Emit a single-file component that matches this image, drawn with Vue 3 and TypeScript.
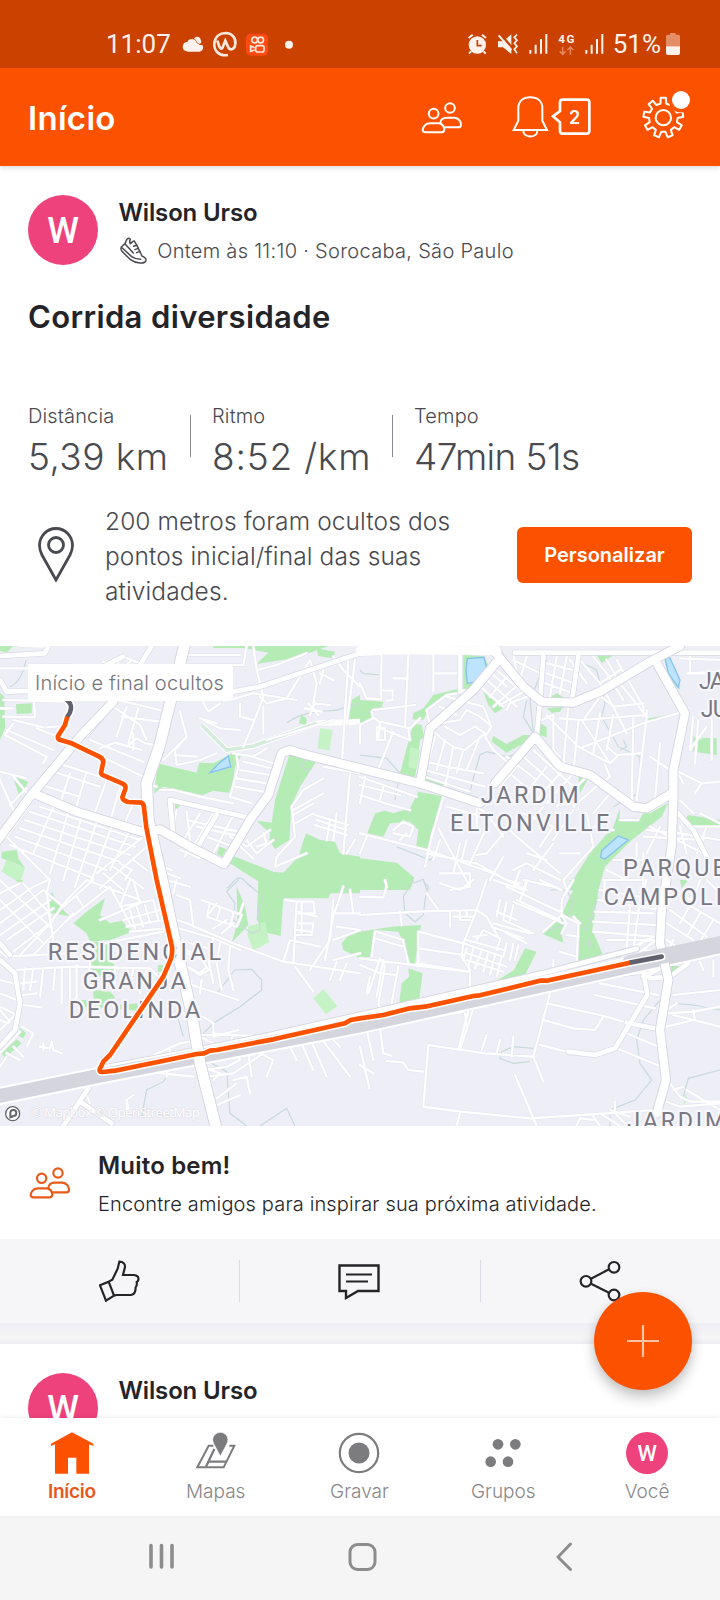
<script setup lang="ts">
interface Tile {
  dx: number
  dy: number
  parks: string
  lawns: string
  water: string
  streams: string
  minor: string
  medium: string
}

interface Label {
  text: string
  x: number
  y: number
  w: number
}

const tiles: Tile[] = [
  {
    dx: 0,
    dy: 0,
    parks:
      'M0 18H40L20 38L0 32Z M640 18H985L930 38L860 58L770 72L805 38L730 24H640Z M0 160L12 168L16 262L0 300Z M48 193L95 190L95 220L50 222Z M38 408L85 425L60 475Z M480 372L590 398L598 368L640 370L700 338L725 345L705 380L695 460L640 452L608 465L490 440L462 460L470 400Z M950 25L1005 35L1000 55L955 48Z M1080 165L1055 180L1045 250L1080 255Z M903 225L920 235L918 255L897 250Z M868 345L950 362L900 440L875 495L868 600L825 628L808 600L825 480L850 400Z M770 542L815 548L810 580Z M525 490L545 490L525 515Z M5 635L50 630L55 655L75 685L45 670L5 655Z M660 620L680 628L665 650L650 640Z M700 648L820 695L850 698L895 650L918 580L960 600L1005 605L1020 640L1080 650V760H840L760 715L690 670Z',
    lawns: 'M960 265L998 270L988 332L953 325Z M20 660L75 685L60 728L5 695Z',
    water: 'M630 398L655 372L685 348L692 380L672 386Z',
    streams:
      'M78 60C70 100 55 130 30 140M860 248C880 235 910 220 950 215S1020 215 1035 200L1080 190M920 355C900 375 900 390 935 388M680 745C700 735 700 710 725 715L760 745',
    minor:
      'M0 85H135M60 18L140 20M85 75H215L230 115M10 180L195 185M10 230L105 232L100 160M0 205H40M15 285L40 250M15 285L140 350L130 370M110 265L270 330M40 240L130 262M140 262L185 258M275 335L430 410M300 325L345 308L425 330M270 300L430 365M340 200L420 255L440 300M350 180L480 210M365 230L480 245M380 200L350 290M415 205L385 310M335 90L370 50L420 70M310 65L370 95M345 110L395 60M270 100L240 105M0 395L80 415M20 270L160 330M100 450L125 435L240 470M145 390L300 440M160 365L330 420M260 395L225 515M210 400L180 490M320 420L280 530M360 440L330 545M400 490L370 560M100 480L20 590L150 720M120 500L420 600M90 515L405 620M75 540L390 645M60 565L360 665M45 590L320 690M30 615L280 715M160 500L100 640M205 515L150 700M245 530L190 720M290 545L225 740M335 560L275 720M385 580L330 690M430 590L290 700M440 620L300 745M340 680L430 745M360 670L395 690L375 720M400 660L440 690M310 700L370 750M560 45H720M565 75H730L740 18M760 18L770 90L790 170L760 250L730 320M770 90L830 75L920 40M540 90L600 130L690 180L760 160L890 180M640 110L600 170M660 190L625 215L600 170M780 170L800 190L860 175L930 60M790 200L790 280M760 240L720 230L720 190M610 240L660 265L720 270M540 215L560 290L490 360M560 290L525 330L530 375L600 360L650 340M525 345L590 350M700 340L760 350L800 325M930 60L950 130L940 190L990 195M1000 50L1030 90L1080 140M1045 60L1025 380M1065 60L1040 250M960 100L1000 120M970 90L960 130M925 190L955 225M945 185L930 225M915 205L965 215M650 250L600 235M800 300L1000 240M740 345L820 370M730 365L815 385M720 390L810 405M710 415L800 430M705 440L790 455M710 350L715 380L690 470L755 490M480 450H520L600 470L700 490M530 510L515 580M560 515L570 600M600 520L550 600M640 520L580 620M700 525L640 640M740 540L670 655M590 560L720 590M560 540L740 580M620 590L700 620M690 590L740 620L810 570M740 600L770 640L820 600M720 620L760 655M790 580L800 610L770 620M970 415L910 450L875 500L885 590L830 650L825 680L920 640M970 460L880 510M940 490L880 525M940 520L885 550M945 525L1045 555M950 540L1040 570M945 555L1040 585M970 380L1080 400M990 540L980 600M1010 520L1000 600M1050 400L1030 640M1065 600L1040 640M480 650L500 700L540 715M485 680L515 690M380 320L410 295L435 310M400 280V330M440 310L480 320M430 430L470 440M0 420L40 510M40 410L90 470M30 495L80 445M540 630L600 655M565 625L555 650',
    medium:
      'M0 48L135 40L145 18M0 120L20 155L110 152M510 480L755 535M510 480L520 585M650 525L590 625M145 160L120 150M700 155L780 140L1085 38M455 18L420 75M370 50L250 110M350 175L260 285',
  },
  {
    dx: 1080,
    dy: 0,
    parks:
      'M310 45L370 48L395 90L350 140L310 155Z M0 180L70 185L65 205L40 215L45 240L0 248Z M290 148L300 158L240 175L210 200L190 240L158 238L160 220L190 205L220 165Z M370 155L430 205L405 220L385 195Z M565 175L590 160L615 175Z M560 205L610 200L600 215L575 218Z M540 248L560 262V292L540 285Z M400 288L440 312L490 285H515L520 295L440 338L395 305Z M160 250L185 255L192 290L180 300L165 415L120 400Z M190 400L255 430V445L190 430Z M175 455L248 468L200 632L168 625L175 570L150 545L90 550L70 590L22 580L45 520L75 512L100 520L150 505Z M710 45L760 45L725 70Z M865 235L940 222L865 248Z M1000 288L1018 300L1028 293L1070 295V345L1000 335Z M985 525L1080 540V560H1000L970 545Z M655 410L685 415L660 460Z M780 505L778 540L835 545L850 520H870L925 488L905 530L815 600L735 680L715 750H620L690 640L760 560Z M0 655L110 668L162 712L150 750H0Z M910 50L950 90L960 150L935 130Z',
    lawns: 'M150 322L180 328L172 388L145 382Z',
    water:
      'M322 56L372 52L380 85L360 125L322 130L318 90Z M915 50L930 55L960 120L955 142L925 100Z M725 632L775 588L805 600L735 657L722 652Z',
    streams:
      'M0 345L80 355L120 400L105 480M325 490C330 440 350 380 360 345L380 335L440 350L480 340M500 180L490 230L520 280L510 180L560 60M650 60L710 90L735 190L725 230L775 320L840 350L835 460L760 500M790 300L800 320L780 330M0 90L10 100L60 105M240 640L210 660L110 620M160 730L190 718L200 750',
    minor:
      'M65 45L62 155M0 45L65 42M145 45L135 262M220 45V155M220 100H300M100 115H145M0 130L20 175L65 178L62 152H98V180L80 182M40 210L165 195M35 215L40 235L0 255M0 255V310M45 235L60 250L55 300M60 265L150 300L145 270M50 260L75 265V300H50ZM100 275L50 400M0 410L170 470M0 435L120 465M0 465L75 490L150 510M15 410L0 490M70 440L60 480M250 470L215 590L195 680M260 500L370 530M200 365L260 380L370 400M195 390L375 440M195 410L330 455M225 290L200 380M255 300L230 390M280 320L255 440M310 330L290 400M360 290L320 390M215 270L250 300L280 320L315 330L375 280L345 260L300 285L255 260M240 250L300 240L320 210L360 230L395 260L375 290L400 330L440 365M240 200L290 225M260 170L370 200L390 250M210 260L200 210L260 165L330 155M180 235L150 265L60 245M350 130L430 200M370 110L470 200M395 100L440 140M410 90L480 150M400 200L490 120M390 170L440 110M420 195L500 150M440 210L450 190L500 170M460 60L540 100M500 50L480 120M560 70L640 90M560 100L640 130M555 130L640 160M590 50L570 170M620 50L600 160M460 40L470 100L440 110M660 60L720 130L760 200L800 280M700 50L740 100L790 180M740 60L780 130L860 230M770 60L850 200V230M720 130L780 90M700 150L760 200L850 190M630 60L680 130M560 225L655 320L750 370L775 345M580 225V330L600 350M545 240L580 225M625 195L610 380M655 245L640 400M600 235L665 240L860 225L860 210M670 240L720 170M665 240L750 370M720 220L700 340M760 225L740 330M820 235L815 490M860 230L830 480M660 325L850 250L970 215M900 310L885 480M840 340L770 345L740 320M735 375L750 410L720 430M440 350L530 420M490 350L580 430M520 330L640 440M560 380L490 470M600 400L530 480M640 400L560 490M470 380L420 440M690 400L590 500M720 430L640 500M750 460L700 520M450 400L520 460M870 350L960 410L970 430M955 395L1025 430L1080 425M1025 430L1005 460M960 55L1080 60M990 50V100H1050M1000 230L990 330L1040 260M1055 235V360M1015 240L1005 370M980 100L1080 95M350 560L350 500L380 520L430 590M440 560L470 590L600 700M390 540L330 670M430 580L380 640L350 645M300 610L280 700M320 600L305 660M235 565L330 740M200 640L350 670L440 720L480 730M0 580L200 630L400 700L500 750M20 590L0 640M120 600L140 580M100 570L130 545L160 560L150 590L100 580M240 600L220 660M240 700H330V740L270 750M490 520L580 560L540 620M550 500L490 570M640 510L580 600M680 520L700 620L610 720L620 750M700 560L760 570M580 610L520 690M600 640L660 640M460 690L500 670L600 720M500 640L560 660M430 650L390 720M480 690L460 740M780 540L835 540M860 570L960 580L1080 600M830 610V680M850 590L1030 600M870 560L1030 640M760 660H860M740 690L800 720M850 640L850 750M900 560L860 640M730 720H860M960 560L980 640M960 480L1000 520M1000 560H1080M1020 520L1080 550M1040 560L1010 640',
    medium:
      'M300 40V155H345M655 50L645 120L635 188M465 38H1080M550 50L540 185M540 185L530 290M945 510L1000 570L1040 650M0 30L160 25L400 30M360 18L400 40M400 0L430 60',
  },
  {
    dx: 0,
    dy: 720,
    parks:
      'M155 35L180 80L208 108L142 98Z M315 55L300 105L330 130L365 122L397 155L330 180L270 185L260 160L220 130L260 95Z M275 185H325V240L345 255L335 290H290L270 260Z M280 330L330 335L345 350L320 385L240 380L245 360L280 360Z M350 375L420 370L415 392L360 388Z M475 255H490L485 275H473Z M50 478L65 490L15 533L5 520Z M60 445L78 458L70 475L52 465Z M775 0L860 50L850 58L842 168L800 158L770 120Z M710 18L735 80L745 135L695 188L712 130Z M775 0H1080V22L1000 15L985 55L870 55L820 50Z M1025 190L1065 145L1080 150V235L1030 210Z M45 0L70 0L60 10Z',
    lawns: 'M795 125L808 185L760 212L742 165L745 140Z M940 355L970 328L1012 378L978 403Z',
    water: '',
    streams:
      'M715 0L680 35L705 70L700 120L755 160L780 150L775 90L790 50L740 10M650 340L705 270L755 268L785 300L785 330L720 380L640 430L600 470M530 400L550 470M600 530L680 575L690 700L740 738M500 590L490 605L440 630L425 710M780 738L860 685L885 738M590 390L600 470',
    minor:
      'M0 40L60 10M0 90L100 20L145 0M0 130L130 30L190 80L280 0M0 165L150 60M20 180L160 85M40 215L150 130L200 60L260 0M0 215L20 230L200 220M60 225L160 120M100 225L220 100M0 60L130 190M30 30L150 140M70 10L120 70L145 95L160 180M150 0L140 40L160 180M230 50L250 80M190 130L330 20M260 0L420 60M330 20L395 140M390 0L360 80L460 60M400 0L420 70L300 120M370 120L480 90M380 140L490 120M390 155L500 145M310 190L490 155M390 90L405 145M410 80L430 140M435 75L450 130M460 60L475 120M45 270L220 260L450 265L475 290M130 265L120 350M165 265L160 330M185 265V370M210 265V380M100 265L90 330M75 265L70 330M230 255V350L210 380M270 250L260 330M345 260V330M400 265L390 320M440 270L420 340M70 375L125 382M65 440L100 460L80 500M60 455L0 520M30 425L0 390M50 400L0 450M20 520L60 540M40 500L70 530M120 500L150 505L155 485L160 510L185 520M130 490V510M60 310L110 305M70 345L110 340M0 300L40 310M0 340L50 360M0 380L40 400M0 420L25 430M500 0L570 20M530 0L520 40M530 45L570 60L580 140M500 110L560 130L700 190L850 245L1080 280M520 140L640 175L720 210M640 175L625 240L640 310M660 190L650 250L665 330M690 200L685 270L700 330M540 200L600 230L625 270L600 285L560 260M540 180L640 210M560 220L610 240M545 250L600 280L615 265M560 310L715 360M575 300L570 330M605 300L600 340M630 260L640 310M605 60L725 105L710 140L620 110L650 70M630 70L620 110M660 85L650 120M700 100L690 140M665 160L700 130M640 145L680 120M855 60L890 65L880 250M850 245L870 180L960 200M890 65H940L945 100H895M890 95L950 110M895 130H940L935 165H890M890 150L930 155M905 65V160M1000 60L990 180L950 240L930 270M1030 20L1000 110L975 240M1000 100H1080M1010 140L1080 150M1050 30L1060 100M1000 180L1080 150M1040 250L1020 300M1010 245L990 300M1000 240L1080 220M885 260L940 335M720 100L730 70M450 530L540 490L600 480M480 545L600 500M500 560L520 570L600 530M510 510L500 590M600 465H700L690 490M600 470L660 500M640 460L700 465L800 470M620 570L680 560L720 540L700 500M620 590L700 580L790 520M440 575L580 590M600 560L660 580L640 600M700 600L740 590L750 640M380 700V660L400 645M380 660L390 700M650 655L710 610M640 680L720 645M630 630L650 680M800 590L820 540L780 520M870 500L890 540M900 480L940 570M930 475L980 590M960 470L1050 590M985 465L1020 500M745 520L755 590M610 410L640 430V460M580 390L550 400M640 470L715 450M0 0L30 30M0 560L20 530M250 620L270 670M260 590L245 620',
    medium: 'M0 190L30 225M0 240L45 280L60 370L45 450L0 500M265 625L190 738M240 665L335 730',
  },
  {
    dx: 1080,
    dy: 720,
    parks:
      'M0 0H162L150 28L0 22Z M0 155L48 148L95 140L183 135L165 250L145 248L130 185L115 155L50 150L30 232L0 230Z M145 265L188 280L178 355L118 368L125 310L148 290Z M400 308L462 270L495 205L530 215L495 285L440 300Z M628 0L640 30L625 60L605 105L660 130L652 252L733 235L697 150L720 0Z M605 108L620 125L605 165L610 188L548 162L580 130Z M735 218H800L780 232L735 238Z M930 258H958L930 285Z M960 0H985L965 25Z',
    lawns: 'M975 640L985 660L970 675Z',
    water: '',
    streams:
      'M160 0L130 50L135 100L165 125L190 105L195 60L205 20L190 5M640 30L570 30M565 150L600 140L640 70L620 30M660 130L680 150L715 50M460 550L420 535L425 515L460 500L520 505M460 550L510 545M900 360L850 420L830 480L840 550L875 600L825 660L750 690V738M940 370L1000 375L1080 390M970 650L985 595L1080 570M685 180L695 190L685 200Z',
    minor:
      'M0 105L170 95L350 90M380 0L350 90L310 190L305 230L330 270V370L295 510M120 95L125 135M0 50L70 52L80 20L75 0M200 40L235 90M240 10L300 30L340 0M400 0L490 30L500 0M490 0L580 20M500 10L480 60M440 20L600 95M460 65L610 130M470 60L600 120M420 60L410 110M440 65L430 115M460 75L450 120M410 95L470 120M350 90L380 110L420 180L410 210M310 190L430 230L440 190M320 180L430 210M350 180L370 150L420 175M340 170L380 165M320 205L310 240M340 205L325 260M365 210L345 265M385 215L370 275M405 225L390 285M425 230L410 290M320 220L440 260M320 240L430 275M400 130L510 160M395 140L490 175M430 120L520 160M440 160L500 190M460 190L450 240M475 195L465 240M270 95V140M300 95V120H330M320 90V110M280 110H340M50 155L130 180M45 175L130 200M45 155L35 230M130 185L145 250M175 155L310 190M175 205L310 225M170 250L330 275M175 155V250M0 235L320 275M0 255L60 280L110 285M60 235L25 340M70 240L50 350M115 260L95 370M30 290L20 340M65 240L75 260L55 370L60 385M605 105L655 130L650 250M640 0L605 60V105L550 155M605 105L620 130L605 160M660 130L640 110M600 215L650 230M580 240V290M620 165L655 170M720 30L900 60M715 60L900 90M705 95L880 100M700 125L890 135M700 155L880 170M740 180H880M810 80L800 200M840 60L820 210M860 0L840 60M735 0L730 60M960 60L1080 130M930 90L1040 170M920 130L1000 180M1000 60L960 130M1020 100L980 170M1060 120L1010 200M940 40L1000 60L1020 0M1040 0L1080 40M540 0L605 30M570 340L520 530L375 520L205 495L190 680L300 695L510 715L740 700L880 690M560 370L720 405L810 430M550 420L640 445L705 450L730 410M540 495L620 515M380 465L365 510M420 480L410 520M460 470L455 530M300 510L340 385M315 400L320 440M295 510L325 395M230 410L310 395M60 445L70 520L95 528M80 543L130 548L145 570L190 575M0 500L28 625M0 455L45 450M20 450L40 540M465 585L530 738M520 530L550 605M300 700L290 738M705 345L885 385M720 310L895 345M800 460L895 500M770 505L905 560M650 735L660 715L700 720M700 710L720 738M765 665V700L800 735M750 690L810 710M720 700L780 738M940 345L1080 330M920 400L1000 395L1080 380M920 440L1000 420L1080 440M1000 390L1005 420M940 405L1000 420M915 440L960 430M920 390L950 370M930 610L960 650L990 665H1080M980 630L1080 690M920 665L960 680L1080 670M940 630L970 620M1060 240V290M1020 245L1030 270M760 230L880 170M830 205L850 185L880 180M840 215L890 180M920 180L950 200M850 210L900 215M940 180L920 220M0 555L40 580',
    medium:
      'M640 300L750 285L850 275L870 295L930 290M850 275L862 345L765 505L705 525L625 515M800 428L895 447M930 290L985 250M940 240L1080 200M850 290L960 235',
  },
]

const labels: Label[] = [
  { text: 'JARDIM', x: 1442, y: 488, w: 294 },
  { text: 'ELTONVILLE', x: 1350, y: 574, w: 478 },
  { text: 'JA', x: 2097, y: 147, w: 78 },
  { text: 'JU', x: 2102, y: 232, w: 82 },
  { text: 'PARQUE', x: 1869, y: 708, w: 308 },
  { text: 'CAMPOLIM', x: 1811, y: 795, w: 425 },
  { text: 'RESIDENCIAL', x: 143, y: 961, w: 520 },
  { text: 'GRANJA', x: 248, y: 1047, w: 310 },
  { text: 'DEOLINDA', x: 206, y: 1133, w: 395 },
  { text: 'JARDIM', x: 1882, y: 1466, w: 294 },
]

const majors =
  'M555 10L510 190L478 320L440 430L445 540L487 720L520 880L575 1120L600 1270L650 1470 M-10 605L90 470L240 290L340 185 M100 460L230 515L440 580L480 568L570 620L672 672L750 540L805 465L845 340L868 330L920 345L1080 385L1260 430L1440 490 M1480 30L1570 140L1625 185L1720 188L1800 155L1950 65L2040 18 M1495 60L1420 150L1290 265L1260 430 M1605 290L1485 430 M1605 290L1680 380L1770 405L1900 500L1940 505L2015 460 M1965 60L2055 220L2020 390V480L2015 620L1985 810L1980 910L2005 1020L1980 1170L1998 1320L1970 1420'
const avenue = 'M555 10L510 190L478 320L440 430L445 540L487 720L520 880L575 1120L600 1270L650 1470'

const highway = 'M-20 1372L300 1307L1080 1156L2180 914'
const service = 'M300 1285L480 1252L800 1187L1080 1124L1640 997L1910 926'
const route =
  'M202 230L195 255L174 288Q172 298 184 301L215 310L298 350Q313 358 309 370L303 398Q303 402 310 406L368 431Q379 437 376 447L367 472Q368 482 385 486L425 488Q432 492 432 504L439 562L470 720L500 850L516 920Q518 940 513 956L490 1010L330 1245L310 1265L299 1288Q297 1297 308 1296L345 1292L590 1242L612 1240L630 1232L650 1230L820 1198L1035 1150L1052 1140L1080 1135L1150 1125L1230 1105L1275 1100L1420 1068L1440 1066L1540 1042L1620 1022L1640 1022L1890 968'
const hiddenStart = 'M190 170Q216 190 213 205Q212 218 202 230'
const hiddenEnd = 'M1890 968L1985 950'

function gearPath(cx: number, cy: number, teeth: number, outer: number, inner: number): string {
  const step = (Math.PI * 2) / teeth
  const pts: string[] = []
  for (let i = 0; i < teeth; i++) {
    const a = Math.PI / 2 + step / 2 + i * step
    const corners: [number, number][] = [
      [inner, -0.29],
      [outer, -0.19],
      [outer, 0.19],
      [inner, 0.29],
    ]
    for (const [r, f] of corners) {
      const t = a + f * step
      pts.push(`${(cx + r * Math.cos(t)).toFixed(1)} ${(cy + r * Math.sin(t)).toFixed(1)}`)
    }
  }
  return `M${pts.join('L')}Z`
}
const gear = gearPath(912, 351, 9, 60, 43)

const people =
  'M200 394H247Q255 394 255 385Q253 370 240 367H211C197 367 190 380 190 388Q190 394 200 394Z M243 366C243 356 252 350 261 350H285C298 351 305 362 305 371Q305 379 297 379H254'
</script>

<template>
  <div class="screen">
    <div class="status">
      <span class="clock">11:07</span>
      <svg class="status-left" viewBox="540 85 350 90">
        <g fill="#fff2ec">
          <path d="M562 152C540 150 548 122 562 124C566 112 586 112 590 126Q598 134 608 134C612 144 606 153 598 153H562Z" />
          <path d="M582 114C588 104 603 108 602 118C606 122 603 128 600 129Q594 130 591 124Q588 117 582 114Z" />
          <circle cx="867" cy="132" r="12" />
        </g>
        <rect x="738" y="99" width="66" height="66" rx="14" fill="#ff4a10" />
        <path
          d="M684 163C655 168 641 148 643 127C646 107 660 97 677 97C697 98 708 112 706 130C704 149 688 150 684 138L676 120L667 142Q662 147 658 138L652 120"
          fill="none"
          stroke="#ffe9df"
          stroke-width="8"
        />
        <g fill="none" stroke="#ffe9df" stroke-width="5">
          <circle cx="764" cy="118" r="8.500000" />
          <circle cx="782" cy="118" r="8.500000" />
          <rect x="767" y="135" width="25" height="19" rx="6" />
          <path d="M764 141L752 136V152L764 148" />
        </g>
      </svg>
      <svg class="status-right" viewBox="320 85 420 90">
        <g fill="#fff2ec">
          <circle cx="351" cy="133" r="26" />
          <path d="M325 112L337 102M377 112L365 102M332 152L326 159M370 152L376 159" stroke="#fff2ec" stroke-width="6" />
          <path d="M351 118V135H364" fill="none" stroke="#ca4100" stroke-width="5" />
          <path d="M413 122H428L453 101V160L428 140H413Z" />
          <path d="M418 96L462 150" stroke="#ca4100" stroke-width="7" />
          <path d="M415 104L453 148" stroke="#fff2ec" stroke-width="6" />
          <path d="M470 102L462 110L470 119L462 128L470 137L462 146L470 158" fill="none" stroke="#fff2ec" stroke-width="5" />
          <path d="M507 148h6v11h-6zM523 132h6v27h-6zM539 115h6v44h-6zM555 100h6v59h-6z" />
          <path d="M675 148h6v11h-6zM691 132h6v27h-6zM707 115h6v44h-6zM723 100h6v59h-6z" />
          <text x="594" y="128" class="net" textLength="48">4G</text>
        </g>
        <path d="M607 138V160M598 152L607 161L616 152M630 162V140M621 148L630 139L639 148" fill="none" stroke="#e6885c" stroke-width="4.500000" />
      </svg>
      <span class="percent">51%</span>
      <svg class="battery" viewBox="915 95 48 72">
        <path d="M930 98H947V103H955Q960 103 960 108V138H918V108Q918 103 923 103H930Z" fill="#e58d64" />
        <path d="M918 138H960V158Q960 164 954 164H924Q918 164 918 158Z" fill="#fff2ec" />
      </svg>
    </div>

    <header class="appbar">
      <h1>Início</h1>
      <svg class="h-people" viewBox="185 300 125 100">
        <g fill="none" stroke="#fff" stroke-width="6">
          <circle cx="223" cy="338" r="14.500000" />
          <circle cx="272" cy="321" r="14.500000" />
          <path :d="people" />
        </g>
      </svg>
      <svg class="h-bell" viewBox="455 285 245 132">
        <g fill="none" stroke="#fff">
          <path stroke-width="6" d="M463 390H563L549 362V325C549 302 533 292 513 292S477 302 477 325V362Z" />
          <path stroke-width="6" d="M492 392C492 415 534 415 534 392" />
          <path stroke-width="8" d="M610 299H682Q690 299 690 307V393Q690 401 682 401H610Q602 401 602 393V367L581 349L602 333V307Q602 299 610 299Z" />
        </g>
        <text class="badge" x="646" y="371" text-anchor="middle">2</text>
      </svg>
      <svg class="h-gear" viewBox="845 265 150 152">
        <path :d="gear" fill="none" stroke="#fff" stroke-width="6" stroke-linejoin="round" />
        <circle cx="912" cy="351" r="23" fill="none" stroke="#fff" stroke-width="6" />
        <circle cx="965" cy="298" r="37" fill="#fc5200" />
        <circle cx="965" cy="298" r="27" fill="#fff" />
      </svg>
    </header>

    <main class="feed">
      <article class="card">
        <div class="author">
          <div class="avatar">W</div>
          <div class="who">
            <strong class="name">Wilson Urso</strong>
            <div class="meta">
              <svg class="shoe" viewBox="355 200 86 82">
                <g fill="none" stroke="#494950" stroke-width="4.500000" stroke-linejoin="round" stroke-linecap="round">
                  <path d="M389 207Q382 200 377 210L373 220L362 230Q359 236 364 243L388 267Q402 277 418 278Q437 279 436 267Q434 261 424 257L409 226L402 214Q400 210 396 214L389 220Q385 216 389 207Z" />
                  <path d="M365 233L393 259Q405 267 420 267M374 222L398 248M399 228L408 225M403 238L413 234M408 247L418 243" />
                </g>
              </svg>
              <span>Ontem às 11:10 · Sorocaba, São Paulo</span>
            </div>
          </div>
        </div>
        <h2>Corrida diversidade</h2>
        <div class="stats">
          <div class="stat s1"><span class="k">Distância</span><span class="v">5,39 km</span></div>
          <i class="bar"></i>
          <div class="stat s2"><span class="k">Ritmo</span><span class="v">8:52 /km</span></div>
          <i class="bar"></i>
          <div class="stat s3"><span class="k">Tempo</span><span class="v">47min 51s</span></div>
        </div>
        <div class="privacy">
          <svg class="pin" viewBox="0 0 36 56">
            <g fill="none" stroke="#494950" stroke-width="2.800000">
              <path d="M18 53L4 28Q1.500 23 1.500 18.500A16.500 17 0 0 1 34.500 18.500Q34.500 23 32 28Z" />
              <circle cx="18" cy="18" r="7.500000" />
            </g>
          </svg>
          <p>200 metros foram ocultos dos<br />pontos inicial/final das suas<br />atividades.</p>
          <button class="cta">Personalizar</button>
        </div>
      </article>

      <div class="map">
        <svg viewBox="0 18 2160 1440" width="720" height="480">
          <rect y="18" width="2160" height="1440" fill="#eeeef7" />
          <g v-for="(t, i) in tiles" :key="'p' + i" :transform="`translate(${t.dx} ${t.dy})`">
            <path :d="t.parks" fill="#b5ebb5" />
            <path :d="t.lawns" fill="#c5f3c5" />
            <path v-if="t.water" :d="t.water" fill="#bde4ff" stroke="#86c1f2" stroke-width="4" />
            <path :d="t.streams" fill="none" stroke="#c8dad9" stroke-width="3.500000" />
          </g>
          <path d="M605 255L680 330L760 318L950 250L1080 245" fill="none" stroke="#fff" stroke-width="17" />
          <path d="M605 255L680 330L760 318L950 250" fill="none" stroke="#d5ecdc" stroke-width="11" />
          <g v-for="(t, i) in tiles" :key="'c' + i" :transform="`translate(${t.dx} ${t.dy})`" class="line">
            <path :d="t.minor" stroke="#e6e6f1" stroke-width="10" />
          </g>
          <g v-for="(t, i) in tiles" :key="'m' + i" :transform="`translate(${t.dx} ${t.dy})`" class="line">
            <path :d="t.minor" stroke="#fff" stroke-width="6.500000" />
            <path :d="t.medium" stroke="#d9d9e8" stroke-width="18" />
            <path :d="t.medium" stroke="#fff" stroke-width="14" />
          </g>
          <g class="line">
            <path :d="service" stroke="#d8d8e2" stroke-width="20" />
            <path :d="service" stroke="#fff" stroke-width="14" />
            <path :d="highway" stroke="#fff" stroke-width="54" />
            <path :d="highway" stroke="#d5d5de" stroke-width="42" />
            <path :d="majors" stroke="#d2d2e3" stroke-width="30" />
            <path :d="avenue" stroke="#d2d2e3" stroke-width="37" />
            <path :d="majors" stroke="#fff" stroke-width="25" />
            <path :d="avenue" stroke="#fff" stroke-width="32" />
            <path d="M1890 968L2180 907" stroke="#d5d5de" stroke-width="46" />
            <path d="M1080 30L1490 32" stroke="#fff" stroke-width="26" />
          </g>
          <g class="place">
            <text v-for="(l, i) in labels" :key="'l' + i" :x="l.x" :y="l.y" :textLength="l.w">{{ l.text }}</text>
          </g>
          <g class="line">
            <path :d="hiddenStart" stroke="#fff" stroke-width="23" />
            <path :d="hiddenEnd" stroke="#fff" stroke-width="23" />
            <path :d="route" stroke="#fff" stroke-width="23" />
            <path :d="hiddenStart" stroke="#62626e" stroke-width="14" />
            <path :d="hiddenEnd" stroke="#62626e" stroke-width="14" />
            <path :d="route" class="track" />
          </g>
          <circle cx="38" cy="1421" r="21" fill="#fff" stroke="#66666e" stroke-width="4" />
          <path d="M31 1432V1418A9 9 0 1 1 40 1428Q36 1430 31 1432Z" fill="none" stroke="#66666e" stroke-width="6" />
          <text class="attr" x="92" y="1432" textLength="508">© Mapbox © OpenStreetMap</text>
        </svg>
        <span class="tag">Início e final ocultos</span>
      </div>

      <section class="kudos">
        <svg class="k-people" viewBox="185 300 125 100">
          <g fill="none" stroke="#e85a1a" stroke-width="6.500000">
            <circle cx="223" cy="337" r="14" />
            <circle cx="272" cy="321" r="14" />
            <path :d="people" />
          </g>
        </svg>
        <div class="k-text">
          <strong>Muito bem!</strong>
          <span>Encontre amigos para inspirar sua próxima atividade.</span>
        </div>
      </section>

      <div class="actions">
        <div class="act">
          <svg width="42" height="42" viewBox="298 404 126 126">
            <path
              d="M301 480L327 469L343 511L319 526ZM327 469L338 463L354 430L359 409Q377 410 376 425L370 449H402Q418 451 416 462Q417 466 411 470Q413 480 408 486Q408 508 394 509H350L343 511"
              fill="none"
              stroke="#242428"
              stroke-width="6.500000"
            />
          </svg>
        </div>
        <i class="split"></i>
        <div class="act">
          <svg class="bubble" width="42" height="36" viewBox="0 0 42 36">
            <path d="M1.500 1.500H40.500V27H20L8 34V27H1.500Z" fill="none" stroke="#242428" stroke-width="2.400000" />
            <path d="M8 10.500H34M8 17.500H30" stroke="#242428" stroke-width="2.200000" />
          </svg>
        </div>
        <i class="split"></i>
        <div class="act">
          <svg width="42" height="42" viewBox="657 104 126 126">
            <g fill="none" stroke="#242428" stroke-width="6.500000">
              <circle cx="678" cy="168" r="16" />
              <circle cx="762" cy="126" r="16" />
              <circle cx="762" cy="209" r="16" />
              <path d="M693 160L747 132M693 175L747 202" />
            </g>
          </svg>
        </div>
      </div>
      <div class="gap"></div>
      <article class="card next">
        <div class="author">
          <div class="avatar">W</div>
          <div class="who"><strong class="name">Wilson Urso</strong></div>
        </div>
      </article>
      <button class="fab" aria-label="Adicionar">
        <svg width="32" height="32" viewBox="0 0 32 32"><path d="M16 0V32M0 16H32" stroke="#ffc3a4" stroke-width="2.200000" /></svg>
      </button>
    </main>

    <nav class="tabs">
      <div class="tab on">
        <svg viewBox="150 258 132 132"><path d="M216 262L280 296V303L267 298V386H229V338H204V386H165V298L153 303V296Z" fill="#fc5200" /></svg>
        <span>Início</span>
      </div>
      <div class="tab">
        <svg viewBox="582 258 132 132">
          <g fill="none" stroke="#7c7c7f" stroke-width="6">
            <path d="M640 302H626L592 367H671L703 302H688" />
            <path d="M643 312L618 365M628 350H678" stroke-width="7" />
          </g>
          <path d="M661 334L642 298Q638 290 638 284A23 22 0 0 1 684 284Q684 290 680 298Z" fill="#7c7c7f" stroke="#fff" stroke-width="2" />
        </svg>
        <span>Mapas</span>
      </div>
      <div class="tab">
        <svg viewBox="0 0 44 44">
          <circle cx="22" cy="22" r="19.200000" fill="none" stroke="#7c7c7f" stroke-width="2.200000" />
          <circle cx="22" cy="22" r="10.500000" fill="#7c7c7f" />
        </svg>
        <span>Gravar</span>
      </div>
      <div class="tab">
        <svg viewBox="366 63 132 132">
          <g fill="#7c7c7f">
            <circle cx="417" cy="103" r="16" />
            <circle cx="469" cy="103" r="16" />
            <circle cx="395" cy="155" r="16" />
            <circle cx="447" cy="155" r="16" />
          </g>
        </svg>
        <span>Grupos</span>
      </div>
      <div class="tab">
        <div class="mini">W</div>
        <span>Você</span>
      </div>
    </nav>

    <div class="system">
      <svg viewBox="0 0 720 84" width="720" height="84">
        <g fill="none" stroke="#8d8d8d" stroke-linecap="round" stroke-linejoin="round">
          <path d="M151 29.500V51M161.500 29.500V51M172 29.500V51" stroke-width="3.600000" />
          <rect x="350" y="28.500" width="25" height="25" rx="7.500000" stroke-width="3" />
          <path d="M570.500 28L558 41L570.500 53.500" stroke-width="3" />
        </g>
      </svg>
    </div>
  </div>
</template>

<style>
body {
  margin: 0;
  background: #fff;
}
</style>

<style scoped>
.screen {
  width: 720px;
  height: 1600px;
  display: flex;
  flex-direction: column;
  overflow: hidden;
  background: #fff;
  color: #242428;
  font-family: Inter, 'Liberation Sans', sans-serif;
}
svg {
  display: block;
  flex: none;
}
.status {
  box-sizing: border-box;
  height: 68px;
  flex: none;
  padding: 20px 0 0 106px;
  display: flex;
  align-items: center;
  background: #ca4100;
  color: #fff2ec;
  font: 26px/48px Roboto, sans-serif;
}
.clock {
  width: 74px;
}
.status-left {
  width: 116.670px;
  height: 30px;
  margin-right: 170px;
}
.status-right {
  width: 140px;
  height: 30px;
}
.net {
  font: bold 35px Roboto, sans-serif;
}
.percent {
  width: 52px;
  margin-left: 6px;
}
.battery {
  width: 16px;
  height: 24px;
}
.appbar {
  position: relative;
  z-index: 2;
  height: 98px;
  flex: none;
  box-sizing: border-box;
  padding-left: 28px;
  display: flex;
  align-items: center;
  background: #fc5200;
  color: #fff;
  box-shadow: 0 3px 4px rgba(0, 0, 0, 0.100);
}
.appbar h1 {
  margin: 0;
  padding-top: 1px;
  width: 393px;
  font-size: 33px;
  line-height: 40px;
  font-weight: 600;
  letter-spacing: 0.300px;
}
.h-people {
  width: 41.670px;
  height: 33.330px;
  margin: 1px 48.330px 0 0;
}
.h-bell {
  width: 81.670px;
  height: 44px;
  margin-right: 48px;
}
.h-gear {
  width: 50px;
  height: 50.670px;
  margin-top: -6px;
}
.badge {
  font: 600 54px Inter, sans-serif;
  fill: #fff;
}
.feed {
  position: relative;
  flex: 1;
  min-height: 0;
  overflow: hidden;
}
.card {
  box-sizing: border-box;
  height: 480px;
  padding: 29px 28px 0;
  background: #fff;
}
.author {
  height: 78px;
  display: flex;
  gap: 20.500px;
}
.avatar {
  width: 70px;
  height: 70px;
  flex: none;
  border-radius: 50%;
  background: #ee427c;
  color: #fff;
  text-align: center;
  font: 500 36px/73px Roboto, sans-serif;
}
.who {
  display: flex;
  flex-direction: column;
}
.name {
  padding-top: 1px;
  font-size: 24px;
  line-height: 34px;
  font-weight: 600;
  letter-spacing: -0.150px;
}
.meta {
  display: flex;
  align-items: center;
  gap: 10px;
  height: 42px;
  color: #494950;
  font-size: 20px;
  font-weight: 350;
  letter-spacing: 0.300px;
  white-space: nowrap;
}
.shoe {
  width: 28.670px;
  height: 27.330px;
}
h2 {
  margin: 24px 0 0;
  font-size: 31px;
  line-height: 40px;
  font-weight: 600;
  letter-spacing: 0.370px;
}
.stats {
  margin-top: 66px;
  display: flex;
  color: #494950;
}
.stat {
  display: flex;
  flex-direction: column;
  white-space: nowrap;
}
.s1 {
  width: 162px;
}
.s2 {
  width: 180px;
  padding-left: 21px;
}
.s3 {
  padding-left: 21px;
}
.k {
  font-size: 20px;
  line-height: 26px;
  font-weight: 350;
  letter-spacing: 0.150px;
}
.v {
  font-size: 37px;
  line-height: 56px;
  font-weight: 300;
}
.s1 .v {
  letter-spacing: 0.450px;
}
.s2 .v {
  letter-spacing: 0.800px;
}
.s3 .v {
  letter-spacing: -0.600px;
}
.bar {
  width: 1px;
  height: 42px;
  margin-top: 12px;
  background: #8a8a90;
}
.privacy {
  margin-top: 18px;
  height: 105px;
  display: flex;
  align-items: center;
  color: #494950;
}
.pin {
  width: 36px;
  height: 56px;
  margin: 0 31px 2px 10px;
}
.privacy p {
  margin: 1px 0 0;
  width: 412px;
  font-size: 24.500px;
  line-height: 35px;
  font-weight: 350;
  letter-spacing: 0.100px;
}
.cta {
  width: 175px;
  height: 56px;
  flex: none;
  margin-bottom: 2px;
  padding: 0;
  border: 0;
  border-radius: 6px;
  background: #fc5200;
  color: #fff;
  font: 600 20px Inter, sans-serif;
}
.map {
  position: relative;
  height: 480px;
}
.line {
  fill: none;
  stroke-linejoin: round;
  stroke-linecap: round;
}
.track {
  stroke: #fc5200;
  stroke-width: 14px;
  stroke-linecap: butt;
}
.place text {
  font: 70px Roboto, sans-serif;
  fill: #787884;
  stroke: #f6f6fb;
  stroke-width: 14px;
  paint-order: stroke;
  stroke-linejoin: round;
}
.attr {
  font: 40px 'Open Sans', sans-serif;
  fill: #fff;
  stroke: #dedee6;
  stroke-width: 3px;
  paint-order: stroke;
}
.tag {
  position: absolute;
  left: 28px;
  top: 18px;
  width: 205px;
  height: 37px;
  box-sizing: border-box;
  padding-left: 7px;
  border-radius: 4px;
  background: #fff;
  color: #74747c;
  font-size: 20px;
  font-weight: 350;
  line-height: 39px;
  letter-spacing: 0.200px;
  white-space: nowrap;
}
.kudos {
  height: 113px;
  display: flex;
  box-sizing: border-box;
  padding: 23px 0 0 28.500px;
  background: #fff;
}
.k-people {
  width: 41.670px;
  height: 33.330px;
  margin: 17px 27.830px 0 0;
}
.k-text {
  display: flex;
  flex-direction: column;
  white-space: nowrap;
}
.k-text strong {
  font-size: 24px;
  line-height: 34px;
  font-weight: 600;
  letter-spacing: 0.200px;
}
.k-text span {
  font-size: 20px;
  line-height: 43px;
  font-weight: 350;
  letter-spacing: 0.150px;
}
.actions {
  height: 84px;
  display: flex;
  align-items: center;
  background: #f6f6f9;
}
.act {
  flex: 1;
  display: flex;
  justify-content: center;
}
.bubble {
  margin: 1px 2px 0 0;
}
.split {
  width: 1px;
  height: 42px;
  background: #dcdce5;
}
.gap {
  height: 21px;
  background: linear-gradient(#eeeef3, #f6f6f9 70%, #eeeef3);
}
.fab {
  position: absolute;
  left: 594px;
  top: 1126px;
  width: 98px;
  height: 98px;
  border: 0;
  border-radius: 50%;
  background: #fc5200;
  display: flex;
  align-items: center;
  justify-content: center;
  padding: 0;
  box-shadow: 0 8px 14px rgba(0, 0, 0, 0.200), 0 2px 8px rgba(0, 0, 0, 0.080);
}
.tabs {
  position: relative;
  height: 98px;
  flex: none;
  box-sizing: border-box;
  padding-right: 1px;
  display: flex;
  background: #fff;
  box-shadow: 0 -1px 4px rgba(0, 0, 0, 0.070);
}
.tab {
  flex: 1;
  display: flex;
  flex-direction: column;
  align-items: center;
  padding-top: 13px;
  color: #87878a;
  font-size: 19px;
  font-weight: 350;
  line-height: 34px;
}
.tab svg {
  width: 44px;
  height: 44px;
}
.on {
  color: #e8571a;
  font-weight: 600;
  letter-spacing: -0.300px;
}
.mini {
  width: 42px;
  height: 42px;
  margin: 1px;
  border-radius: 50%;
  background: #ee427c;
  color: #fff;
  text-align: center;
  font: 500 22px/43px Roboto, sans-serif;
}
.system {
  height: 84px;
  flex: none;
  background: #f5f5f5;
}
</style>
